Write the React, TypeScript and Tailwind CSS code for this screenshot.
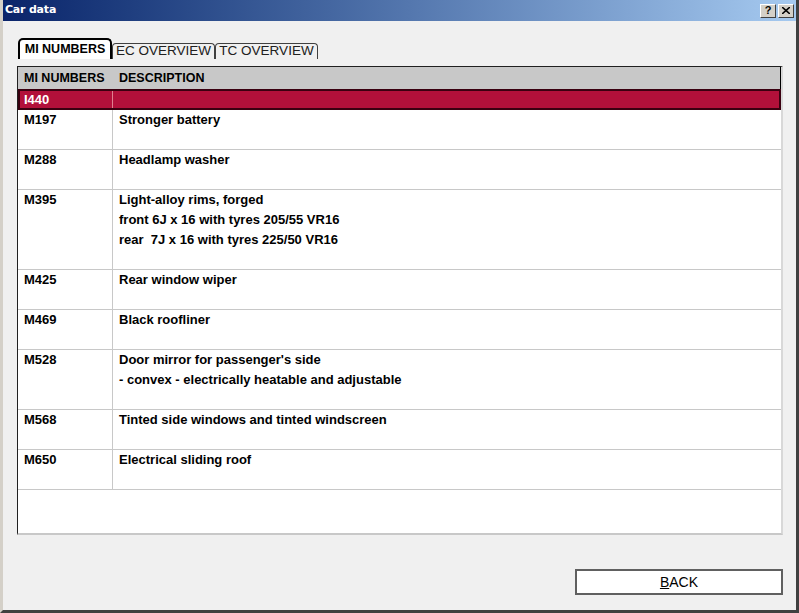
import React from 'react';

type Row = { code: string; lines: string[]; height: string };

const rows: Row[] = [
  { code: 'M197', lines: ['Stronger battery'], height: 'h-[40px]' },
  { code: 'M288', lines: ['Headlamp washer'], height: 'h-[40px]' },
  {
    code: 'M395',
    lines: ['Light-alloy rims, forged', 'front 6J x 16 with tyres 205/55 VR16', 'rear\u00a0 7J x 16 with tyres 225/50 VR16'],
    height: 'h-[80px]',
  },
  { code: 'M425', lines: ['Rear window wiper'], height: 'h-[40px]' },
  { code: 'M469', lines: ['Black roofliner'], height: 'h-[40px]' },
  {
    code: 'M528',
    lines: ["Door mirror for passenger's side", '- convex - electrically heatable and adjustable'],
    height: 'h-[60px]',
  },
  { code: 'M568', lines: ['Tinted side windows and tinted windscreen'], height: 'h-[40px]' },
  { code: 'M650', lines: ['Electrical sliding roof'], height: 'h-[40px]' },
];

const TitleButton = ({ children }: { children: React.ReactNode }) => (
  <div className="w-[16px] h-[14px] bg-[#d4d0c8] border border-t-white border-l-white border-r-[#404040] border-b-[#404040] flex items-center justify-center text-[11px] font-bold leading-none text-black">
    {children}
  </div>
);

const App: React.FC = () => {
  return (
    <div className="w-[799px] h-[613px] flex flex-col bg-[#f0f0f0] border-l-[3px] border-l-[#d4d0c8] border-r-[3px] border-r-[#404040] border-b-[3px] border-b-[#404040] overflow-hidden font-['Liberation_Sans',Arial,sans-serif]">
      {/* title bar */}
      <div className="h-[21px] flex items-center justify-between pl-[2px] pr-[2px] bg-gradient-to-r from-[#0a246a] to-[#a6caf0]">
        <span className="text-white font-bold text-[11px] font-['DejaVu_Sans',sans-serif] tracking-[-0.2px]">Car data</span>
        <div className="flex gap-[2px]">
          <TitleButton>?</TitleButton>
          <TitleButton>
            <svg width="8" height="7" viewBox="0 0 8 7">
              <path d="M0 0 L8 7 M8 0 L0 7" stroke="black" strokeWidth="1.6" />
            </svg>
          </TitleButton>
        </div>
      </div>

      <div className="flex-1 flex flex-col pl-[14px] pr-[13px] pt-[17px]">
        {/* tabs */}
        <div className="flex items-end h-[21px] pl-[1px]">
          <div className="h-[21px] w-[94px] border-2 border-black border-b-0 rounded-t-[5px] bg-white flex items-center justify-center text-[12.5px] font-bold text-black">
            MI NUMBERS
          </div>
          <div className="h-[16px] w-[103px] border border-[#404040] border-b-0 rounded-t-[4px] flex items-center justify-center text-[13.5px] text-[#202020]">
            EC OVERVIEW
          </div>
          <div className="h-[16px] w-[103px] border border-[#404040] border-b-0 rounded-t-[4px] flex items-center justify-center text-[13.5px] text-[#202020]">
            TC OVERVIEW
          </div>
        </div>

        {/* table */}
        <div className="mt-[7px] h-[469px] bg-white border-t border-l border-t-[#202020] border-l-[#202020] border-r-2 border-b-2 border-r-[#d8d8d8] border-b-[#c8c8c8] flex flex-col">
          <div className="h-[22px] bg-[#c8c8c8] flex items-center text-[12.5px] font-bold text-black border-r border-black">
            <div className="w-[95px] pl-[6px]">MI NUMBERS</div>
            <div className="pl-[6px]">DESCRIPTION</div>
          </div>
          <div className="h-[21px] bg-[#b2103a] border-2 border-[#3a0010] flex items-center text-[13px] font-bold text-white">
            <div className="w-[93px] pl-[4px] h-full flex items-center border-r border-[#e08090]">I440</div>
            <div className="flex-1" />
          </div>
          {rows.map((r) => (
            <div key={r.code} className={`${r.height} flex border-b border-[#c8c8c8] text-[13px] font-bold text-black`}>
              <div className="w-[95px] pl-[6px] leading-[20px] border-r border-[#c8c8c8]">{r.code}</div>
              <div className="flex-1 pl-[6px] flex flex-col">
                {r.lines.map((l, i) => (
                  <div key={i} className="h-[20px] leading-[20px] whitespace-pre">
                    {l}
                  </div>
                ))}
              </div>
            </div>
          ))}
        </div>

        {/* footer */}
        <div className="flex justify-end mt-[34px]">
          <button className="w-[208px] h-[26px] bg-white border-2 border-[#606060] text-[14px] text-black flex items-center justify-center">
            <span>
              <span className="underline">B</span>ACK
            </span>
          </button>
        </div>
      </div>
    </div>
  );
};

export default App;
